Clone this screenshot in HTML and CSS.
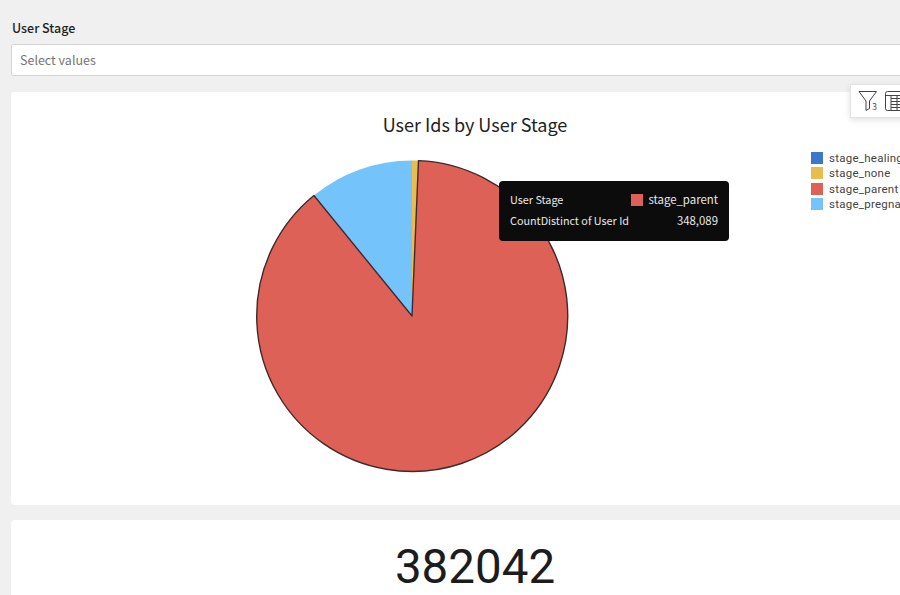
FILE: index.html
```html
<!DOCTYPE html>
<html lang="en">
<head>
    <meta charset="UTF-8">
    <title>User Stage Dashboard</title>
    <link rel="stylesheet" href="styles.css">
</head>
<body>
    <div class="page">
        <!-- Filter -->
        <div class="filter">
            <div class="filter-label">User Stage</div>
            <div class="filter-input">Select values</div>
        </div>

        <!-- Pie chart card -->
        <div class="card chart-card">
            <div class="toolbar">
                <svg class="icon-filter" width="20" height="24" viewBox="0 0 20 24" fill="none" stroke="#444" stroke-width="1">
                    <path d="M1 2.5H18.5L11.5 12V19.5L8 21.5V12Z"/>
                </svg>
                <span class="filter-count">3</span>
                <svg class="icon-table" width="18" height="22" viewBox="0 0 18 22" fill="none" stroke="#444" stroke-width="1">
                    <rect x="0.5" y="1.5" width="17" height="19" rx="2"/>
                    <path d="M1 5.5H17M6 5.5V20M12 5.5V20M6 8.5H17M6 11.5H17M6 14.5H17M6 17.5H17"/>
                </svg>
            </div>

            <h2 class="chart-title">User Ids by User Stage</h2>

            <div class="chart-body">
                <svg class="pie" width="320" height="320" viewBox="0 0 320 320">
                    <!-- center 160,160 radius 155.5 -->
                    <path d="M160 160L61.9 39.5A155.5 155.5 0 0 1 160 4.5Z" fill="#74c3fb"/>
                    <path d="M160 160L160 4.5A155.5 155.5 0 0 1 166.5 4.6Z" fill="#e6bd4e"/>
                    <path d="M160 160L166.5 4.6A155.5 155.5 0 1 1 61.9 39.5Z" fill="#de6158" stroke="#40292a" stroke-width="1.4" stroke-linejoin="round"/>
                </svg>

                <ul class="legend">
                    <li class="legend-item"><span class="swatch swatch-healing"></span>stage_healing</li>
                    <li class="legend-item"><span class="swatch swatch-none"></span>stage_none</li>
                    <li class="legend-item"><span class="swatch swatch-parent"></span>stage_parent</li>
                    <li class="legend-item"><span class="swatch swatch-pregnant"></span>stage_pregnant</li>
                </ul>
            </div>

            <div class="tooltip">
                <div class="tooltip-row">
                    <span>User Stage</span>
                    <span class="tooltip-value"><span class="swatch swatch-parent tooltip-swatch"></span>stage_parent</span>
                </div>
                <div class="tooltip-row">
                    <span>CountDistinct of User Id</span>
                    <span class="tooltip-value">348,089</span>
                </div>
            </div>
        </div>

        <!-- Big number card -->
        <div class="card number-card">382042</div>
    </div>
</body>
</html>
```

FILE: styles.css
```css
html, body {
    margin: 0;
    padding: 0;
    height: 595px;
    overflow: hidden;
    background-color: #f0f0f0;
}

body {
    font-family: "Noto Sans CJK SC", "Noto Sans", sans-serif;
    color: #1f1f1f;
}

.page {
    width: 928px;
    padding: 18px 0 0 11px;
}

.filter-label {
    font-size: 12.5px;
    font-weight: 500;
    line-height: 19px;
    padding-left: 1px;
    margin-bottom: 7px;
}

.filter-input {
    height: 30px;
    line-height: 30px;
    padding-left: 8px;
    background: #fff;
    border: 1px solid #d4d4d4;
    border-radius: 2px;
    font-size: 12.5px;
    color: #757575;
}

.card {
    background: #fff;
    border-radius: 4px;
}

.chart-card {
    position: relative;
    height: 413px;
    margin-top: 16px;
}

.toolbar {
    position: absolute;
    top: -8px;
    left: 839px;
    width: 86px;
    height: 34px;
    display: flex;
    align-items: center;
    padding-left: 7px;
    box-sizing: border-box;
    background: #fff;
    border: 1px solid #e2e2e2;
    box-shadow: 0 2px 6px rgba(0, 0, 0, 0.12);
}

.icon-filter {
    flex: none;
}

.filter-count {
    font-size: 9px;
    color: #555;
    margin: 11px 0 0 -6px;
    width: 13px;
}

.chart-title {
    margin: 0;
    padding-top: 20px;
    font-size: 18px;
    font-weight: 400;
    line-height: 24px;
    text-align: center;
    color: #222;
}

.chart-body {
    display: flex;
    align-items: flex-start;
    padding: 19.5px 0 0 241px;
}

.pie {
    flex: none;
}

.legend {
    list-style: none;
    margin: 0;
    padding: 0;
    margin-left: 239px;
    margin-top: -5.5px;
    font-family: Roboto, sans-serif;
    font-size: 11.5px;
    letter-spacing: 0.25px;
    color: #444;
    white-space: nowrap;
}

.legend-item {
    display: flex;
    align-items: center;
    height: 15.5px;
}

.swatch {
    display: inline-block;
    flex: none;
    width: 12px;
    height: 12px;
    margin-right: 6px;
}

.swatch-healing { background: #3d77c9; }
.swatch-none { background: #e6bd4e; }
.swatch-parent { background: #de6158; }
.swatch-pregnant { background: #74c3fb; }

.tooltip {
    position: absolute;
    top: 89px;
    left: 488px;
    width: 230px;
    height: 60px;
    box-sizing: border-box;
    padding: 8px 11px;
    background: #0c0c0c;
    border-radius: 4px;
    font-size: 10.8px;
    color: #e8e8e8;
}

.tooltip-row {
    display: flex;
    justify-content: space-between;
    line-height: 21px;
}

.tooltip-value {
    display: flex;
    align-items: center;
    font-size: 11.4px;
}

.tooltip-swatch {
    margin-right: 5px;
}

.number-card {
    height: 58px;
    margin-top: 15px;
    padding-top: 17px;
    font-family: Roboto, sans-serif;
    font-size: 47.5px;
    font-weight: 400;
    line-height: 60px;
    text-align: center;
    color: #1c1c1c;
    border-radius: 4px 4px 0 0;
}
```
